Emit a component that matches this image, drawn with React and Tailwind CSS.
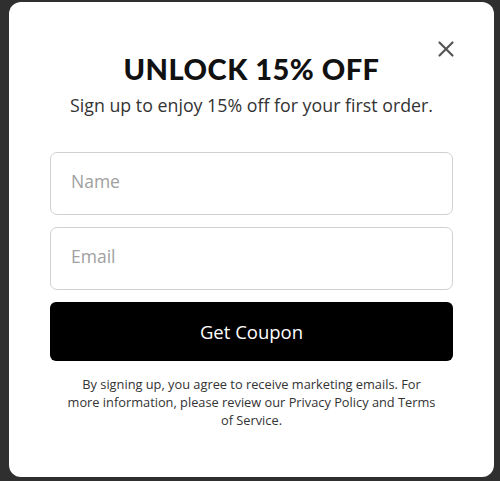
import React from "react";

const App = () => {
  return (
    <div className="w-[500px] h-[481px] bg-[#2f2f2f] pt-[2px] pl-[9px]" style={{ fontFamily: "'Open Sans', 'Noto Sans', sans-serif" }}>
      <div className="relative w-[485px] h-[475px] bg-white rounded-[12px] px-[41px] pt-[50px]">
        <button className="absolute right-[39px] top-[38px] text-[#555]" aria-label="Close">
          <svg width="18" height="18" viewBox="0 0 18 18" fill="none" stroke="currentColor" strokeWidth="2.2" strokeLinecap="round">
            <path d="M2.5 2.5L15.5 15.5M15.5 2.5L2.5 15.5" />
          </svg>
        </button>
        <h2
          className="text-center text-[29px] leading-[34px] font-black text-[#111] tracking-[0.5px]"
          style={{ fontFamily: "Lato, sans-serif" }}
        >
          UNLOCK 15% OFF
        </h2>
        <p className="text-center text-[17.8px] leading-[22px] text-[#333] mt-[8px]">Sign up to enjoy 15% off for your first order.</p>
        <div className="flex flex-col gap-[12px] mt-[36px]">
          <input
            className="h-[63px] w-full border border-[#d0d0d0] rounded-[7px] px-[20px] pb-[6px] text-[17.5px] placeholder-[#a0a0a0] outline-none"
            placeholder="Name"
          />
          <input
            className="h-[63px] w-full border border-[#d0d0d0] rounded-[7px] px-[20px] pb-[6px] text-[17.5px] placeholder-[#a0a0a0] outline-none"
            placeholder="Email"
          />
          <button className="h-[59px] w-full bg-black text-white rounded-[6px] text-[18.5px]">Get Coupon</button>
        </div>
        <p className="text-center text-[12.8px] leading-[18px] text-[#333] mt-[14px] px-[16px]">
          By signing up, you agree to receive marketing emails. For more information, please review our Privacy Policy and Terms of Service.
        </p>
      </div>
    </div>
  );
};

export default App;
